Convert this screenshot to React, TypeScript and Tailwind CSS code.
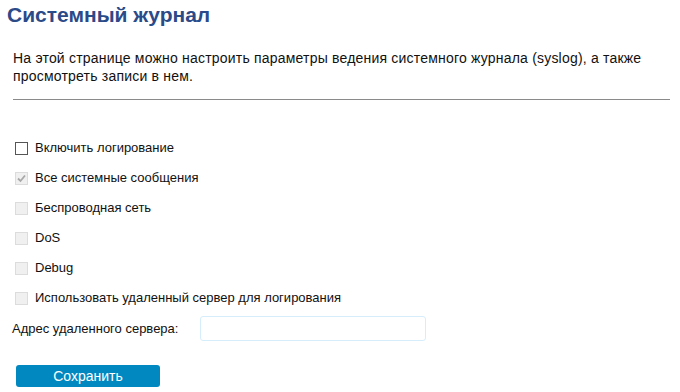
import React from "react";

const font = { fontFamily: '"Liberation Sans", Arial, sans-serif' };

function Box({ state }: { state: "empty" | "checked-disabled" | "disabled" }) {
  if (state === "empty") {
    return <span className="block w-[13px] h-[13px] border border-[#555] bg-white" />;
  }
  return (
    <span className="flex items-center justify-center w-[13px] h-[13px] border border-[#dcdcdc] bg-[#f0f0f0]">
      {state === "checked-disabled" && (
        <svg width="9" height="9" viewBox="0 0 9 9">
          <path d="M1 4.5 L3.5 7 L8 1.5" fill="none" stroke="#a8a8a8" strokeWidth="1.8" />
        </svg>
      )}
    </span>
  );
}

export default function App() {
  const rows: { label: string; state: "empty" | "checked-disabled" | "disabled" }[] = [
    { label: "Включить логирование", state: "empty" },
    { label: "Все системные сообщения", state: "checked-disabled" },
    { label: "Беспроводная сеть", state: "disabled" },
    { label: "DoS", state: "disabled" },
    { label: "Debug", state: "disabled" },
    { label: "Использовать удаленный сервер для логирования", state: "disabled" },
  ];
  return (
    <div className="w-[680px] h-[392px] bg-white overflow-hidden text-[#1a1a1a]" style={font}>
      <h1 className="pl-[7px] pt-[3px] text-[21px] leading-[24px] font-bold text-[#2b4a88]">Системный журнал</h1>
      <p className="pl-[13px] pr-[20px] mt-[22px] text-[14px] leading-[18px] tracking-[0.2px] text-[#111]">
        На этой странице можно настроить параметры ведения системного журнала (syslog), а также просмотреть записи в нем.
      </p>
      <div className="ml-[13px] mr-[10px] mt-[14px] h-px bg-[#8a8a8a]" />
      <div className="mt-[40px] flex flex-col gap-[14px]">
        {rows.map((r) => (
          <label key={r.label} className="flex items-center h-[16px] pl-[15px] gap-[7px] text-[13px] text-[#111]">
            <Box state={r.state} />
            <span>{r.label}</span>
          </label>
        ))}
      </div>
      <div className="mt-[10px] flex items-center pl-[12px]">
        <span className="w-[188px] text-[13px] text-[#111]">Адрес удаленного сервера:</span>
        <div className="w-[226px] h-[25px] border border-[#d6eefb] rounded-[3px] bg-white" />
      </div>
      <button className="mt-[24px] ml-[16px] w-[144px] h-[22px] rounded-[3px] bg-[#0288c0] text-white text-[14px] leading-[22px]">
        Сохранить
      </button>
    </div>
  );
}
